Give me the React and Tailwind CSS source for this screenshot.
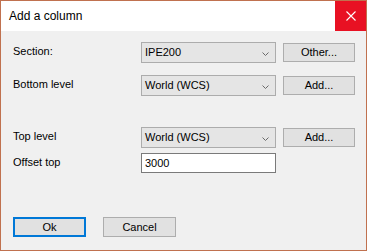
import React from 'react';

const Chevron = () => (
  <svg width="7" height="4" viewBox="0 0 7 4" className="absolute right-[6px] top-[9px]">
    <polyline points="0.5,0.5 3.5,3.5 6.5,0.5" fill="none" stroke="#6a6a6a" strokeWidth="1" />
  </svg>
);

const Select = ({ value }) => (
  <div className="relative w-[135px] h-[21px] border border-[#acacac] bg-[#e5e5e5] pl-[3px] leading-[19px] shrink-0">
    {value}
    <Chevron />
  </div>
);

const SideButton = ({ children }) => (
  <button
    type="button"
    className="ml-[7px] mt-[1px] w-[72px] h-[19px] border border-[#adadad] bg-[#e1e1e1] leading-[17px] text-center shrink-0"
  >
    {children}
  </button>
);

const Label = ({ children }) => (
  <div className="w-[128px] pt-[3px] leading-[13px] shrink-0">{children}</div>
);

export default function App() {
  return (
    <div className="w-[367px] h-[251px] border border-[#c0714f] bg-[#f0f0f0] flex flex-col font-['Liberation_Sans',Arial,sans-serif] text-[11px] text-black">
      {/* Title bar */}
      <div className="h-[30px] bg-white flex items-stretch shrink-0">
        <div className="flex-1 pl-[8px] flex items-center text-[12px] text-black">Add a column</div>
        <div className="w-[31px] bg-[#e81123] flex items-center justify-center">
          <svg width="10" height="10" viewBox="0 0 10 10">
            <path d="M0.5 0.5 L9.5 9.5 M9.5 0.5 L0.5 9.5" stroke="white" strokeWidth="1.1" fill="none" />
          </svg>
        </div>
      </div>

      {/* Body */}
      <div className="flex-1 pl-[12px] pt-[11px]">
        <div className="flex items-start">
          <Label>Section:</Label>
          <Select value="IPE200" />
          <SideButton>Other...</SideButton>
        </div>
        <div className="flex items-start mt-[12px]">
          <Label>Bottom level</Label>
          <Select value="World (WCS)" />
          <SideButton>Add...</SideButton>
        </div>
        <div className="flex items-start mt-[31px]">
          <Label>Top level</Label>
          <Select value="World (WCS)" />
          <SideButton>Add...</SideButton>
        </div>
        <div className="flex items-start mt-[5px]">
          <Label>Offset top</Label>
          <div className="w-[135px] h-[20px] border border-[#7a7a7a] bg-white pl-[3px] leading-[18px]">3000</div>
        </div>

        <div className="flex gap-[17px] mt-[44px]">
          <button
            type="button"
            className="w-[73px] h-[20px] border-2 border-[#0078d7] bg-[#e1e1e1] leading-[16px] text-center"
          >
            Ok
          </button>
          <button
            type="button"
            className="w-[73px] h-[20px] border border-[#adadad] bg-[#e1e1e1] leading-[18px] text-center"
          >
            Cancel
          </button>
        </div>
      </div>
    </div>
  );
}
